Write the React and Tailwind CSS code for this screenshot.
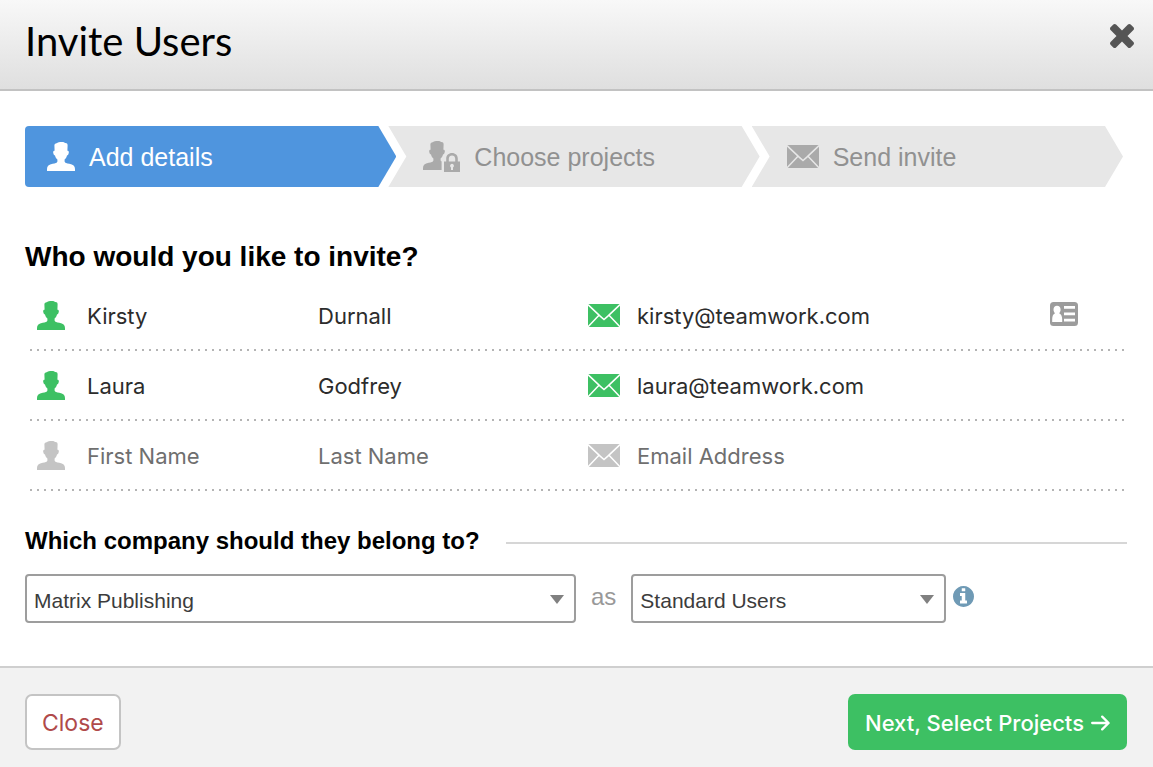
import React from "react";

const PERSON =
  "M7.4 3.6C7.3 2.2 8.2 1.4 9.6 1.2C11 .1 15.6-.3 17.4.5L18 1.1C19.8.9 20.7 1.8 20.6 3.6L20.4 8.8C21.9 8.8 22.1 10 21.6 11.4C21.2 12.8 20.7 13.3 20 13.4C19.6 15.2 18.6 16.6 17.6 17.6V19.4C17.8 20.8 19.8 21.2 22.3 21.7C26.2 22.5 28 24 28 27V29H0V27C0 24 1.8 22.5 5.7 21.7C8.2 21.2 10.2 20.8 10.4 19.4V17.6C9.4 16.6 8.4 15.2 8 13.4C7.3 13.3 6.8 12.8 6.4 11.4C5.9 10 6.1 8.8 7.6 8.8Z";

function PersonIcon({ className = "" }) {
  return (
    <svg className={"shrink-0 " + className} width="28" height="29" viewBox="0 0 28 29" fill="currentColor" aria-hidden="true">
      <path d={PERSON} />
    </svg>
  );
}

function PersonLockIcon() {
  return (
    <svg className="shrink-0" width="37" height="31" viewBox="0 0 37 31" fill="currentColor" aria-hidden="true">
      <path d="M7.4 3.6C7.3 2.2 8.2 1.4 9.6 1.2C11 .1 15.6-.3 17.4.5L18 1.1C19.8.9 20.7 1.8 20.6 3.6L20.4 8.8C21.9 8.8 22.1 10 21.6 11.4C21.2 12.8 20.7 13.3 20 13.4C19.6 15.2 18.6 16.6 17.6 17.6V19.4L18.6 20.4V29H0V27C0 24 1.8 22.5 5.7 21.7C8.2 21.2 10.2 20.8 10.4 19.4V17.6C9.4 16.6 8.4 15.2 8 13.4C7.3 13.3 6.8 12.8 6.4 11.4C5.9 10 6.1 8.8 7.6 8.8Z" />
      <path
        fillRule="evenodd"
        d="M21 20.5H23.2V17.6C23.2 14.2 25.7 12 29 12S34.8 14.2 34.8 17.6V20.5H37V31H21ZM25.8 20.5H32.2V17.8C32.2 15.7 30.8 14.5 29 14.5S25.8 15.7 25.8 17.8ZM29 22.8A2 2 0 0 0 28 26.5V29H30V26.5A2 2 0 0 0 29 22.8Z"
      />
    </svg>
  );
}

function MailIcon({ className = "", line = "stroke-white" }) {
  return (
    <svg className={"shrink-0 " + className} width="32" height="23" viewBox="0 0 32 23" aria-hidden="true">
      <rect width="32" height="23" rx="1" fill="currentColor" />
      <g className={line} fill="none" strokeWidth="1.5">
        <path d="M0 .6L12.4 12.4L16 15.6L19.6 12.4L32 .6" />
        <path d="M0 22.8L11.2 11M32 22.8L20.8 11" />
      </g>
    </svg>
  );
}

function CardIcon() {
  return (
    <svg width="28" height="24" viewBox="0 0 28 24" aria-hidden="true">
      <rect width="28" height="24" rx="3.5" fill="currentColor" />
      <g fill="#fff">
        <path d="M7 3.8C9.2 3.8 10.6 5.4 10.6 7.6C10.6 9.2 10 10.4 9.2 11.2C11.2 12 12.2 14.6 12.2 17.6V20H2.2V17.6C2.2 14.6 3 12 5 11.2C4.1 10.4 3.5 9.2 3.5 7.6C3.5 5.4 4.9 3.8 7 3.8Z" />
        <path d="M14 4H25V6.8H14ZM14 10.4H25V13.2H14ZM14 16.8H25V19.6H14Z" />
      </g>
    </svg>
  );
}

function Step({ first, active, icon, children }) {
  return (
    <li
      aria-current={active ? "step" : undefined}
      className={
        "-mr-2 flex h-[61px] items-center gap-3.5 text-[25px] leading-8 " +
        (first
          ? "rounded-l-[4px] pl-[22px] [clip-path:polygon(0_0,calc(100%-18px)_0,100%_50%,calc(100%-18px)_100%,0_100%)] "
          : "pl-[35px] [clip-path:polygon(0_0,calc(100%-18px)_0,100%_50%,calc(100%-18px)_100%,0_100%,18px_50%)] ") +
        (active ? "bg-[#4f95de] text-white" : "bg-[#e7e7e7] text-[#aaaaaa]")
      }
    >
      {icon}
      <span className={active ? "text-white" : "text-[#919191]"}>{children}</span>
    </li>
  );
}

const field =
  "w-full min-w-0 bg-transparent pt-0.5 font-[Inter,sans-serif] text-[22px] leading-8 text-[#2c2c2c] outline-none placeholder:text-[#6f6f6f] placeholder:opacity-100";

function InviteRow({ first, last, email, card }) {
  const tone = email ? "text-[#3dc063]" : "text-[#c4c4c4]";
  return (
    <li className="flex h-[70px] flex-col">
      <div className="grid flex-1 grid-cols-[50px_231fr_270fr_49px_413fr_74px] items-center pl-[7px]">
        <PersonIcon className={tone} />
        <input className={field} aria-label="First name" placeholder="First Name" defaultValue={first} />
        <input className={field} aria-label="Last name" placeholder="Last Name" defaultValue={last} />
        <MailIcon className={tone} />
        <input className={field} type="email" aria-label="Email address" placeholder="Email Address" defaultValue={email} />
        {card && (
          <button type="button" aria-label="Contact details" className="justify-self-start pb-0.5 text-[#9c9c9c]">
            <CardIcon />
          </button>
        )}
      </div>
      <div className="h-0.5 bg-[repeating-linear-gradient(90deg,#b4b4b4_0,#b4b4b4_2px,transparent_2px,transparent_7px)]" />
    </li>
  );
}

function Dropdown({ label, options, className }) {
  return (
    <div className={"relative " + className}>
      <select
        aria-label={label}
        className="h-[49px] w-full appearance-none rounded-[4px] border-2 border-[#9d9d9d] bg-white pl-[7px] pr-9 pt-1 text-[21px] leading-7 text-[#3c3c3c]"
      >
        {options.map((o) => (
          <option key={o}>{o}</option>
        ))}
      </select>
      <svg className="pointer-events-none absolute right-3 top-[21px]" width="14" height="9" viewBox="0 0 14 9" aria-hidden="true">
        <path d="M0 0H14L7 9Z" fill="#808080" />
      </svg>
    </div>
  );
}

export default function App() {
  return (
    <div className="flex min-h-screen flex-col bg-white font-['Liberation_Sans',Arial,sans-serif] text-black">
      <header className="flex h-[91px] items-start justify-between border-b-2 border-[#c2c2c2] bg-linear-to-b from-[#f8f8f8] to-[#dfdfdf] pl-[25px] pr-[19px]">
        <h1 className="pt-[17px] font-[Lato,sans-serif] text-[40px] leading-[48px]">Invite Users</h1>
        <button type="button" aria-label="Close dialog" className="pt-6 text-[#555555]">
          <svg width="24" height="24" viewBox="302 366 1188 1188" fill="currentColor" aria-hidden="true">
            <path d="M1490 1322q0 40-28 68l-136 136q-28 28-68 28t-68-28l-294-294-294 294q-28 28-68 28t-68-28l-136-136q-28-28-28-68t28-68l294-294-294-294q-28-28-28-68t28-68l136-136q28-28 68-28t68 28l294 294 294-294q28-28 68-28t68 28l136 136q28 28 28 68t-28 68l-294 294 294 294q28 28 28 68z" />
          </svg>
        </button>
      </header>

      <main className="flex-1 pb-[43px] pl-[25px] pr-[26px] pt-[35px]">
        <ol className="mr-3 grid grid-cols-3">
          <Step first active icon={<PersonIcon />}>Add details</Step>
          <Step icon={<PersonLockIcon />}>Choose projects</Step>
          <Step icon={<MailIcon line="stroke-[#e7e7e7]" />}>Send invite</Step>
        </ol>

        <h2 className="mt-[50px] text-[28px] font-bold leading-10">Who would you like to invite?</h2>
        <ul className="ml-[5px] mr-[3px] mt-1">
          <InviteRow first="Kirsty" last="Durnall" email="kirsty@teamwork.com" card />
          <InviteRow first="Laura" last="Godfrey" email="laura@teamwork.com" />
          <InviteRow />
        </ul>

        <div className="mt-[34px] flex items-center gap-[26px]">
          <h2 className="text-2xl font-bold leading-8">Which company should they belong to?</h2>
          <div className="mt-1 h-0.5 flex-1 bg-[#d6d6d6]" />
        </div>
        <div className="mt-[17px] flex items-center">
          <Dropdown className="w-1/2" label="Company" options={["Matrix Publishing"]} />
          <span className="px-[15px] pb-1 text-2xl leading-8 text-[#999999]">as</span>
          <Dropdown className="w-[315px]" label="User type" options={["Standard Users"]} />
          <button type="button" aria-label="About user types" className="ml-[7px] pb-1 text-[#6f9ab5]">
            <svg width="21" height="21" viewBox="128 128 1536 1536" fill="currentColor" aria-hidden="true">
              <path d="M1152 1376v-160q0-14-9-23t-23-9h-96v-512q0-14-9-23t-23-9h-320q-14 0-23 9t-9 23v160q0 14 9 23t23 9h96v320h-96q-14 0-23 9t-9 23v160q0 14 9 23t23 9h448q14 0 23-9t9-23zm-128-896v-160q0-14-9-23t-23-9h-192q-14 0-23 9t-9 23v160q0 14 9 23t23 9h192q14 0 23-9t9-23zm640 416q0 209-103 385.5t-279.5 279.5-385.5 103-385.5-103-279.5-279.5-103-385.5 103-385.5 279.5-279.5 385.5-103 385.5 103 279.5 279.5 103 385.5z" />
            </svg>
          </button>
        </div>
      </main>

      <footer className="flex items-center justify-between border-t-2 border-[#cfcfcf] bg-[#f2f2f2] pb-[17px] pl-[25px] pr-[26px] pt-[26px] font-[Inter,sans-serif] leading-8">
        <button type="button" className="h-14 rounded-[7px] border-2 border-[#c4c4c4] bg-white px-[15px] pt-0.5 text-[23px] text-[#b04a4a]">
          Close
        </button>
        <button type="button" className="flex h-14 items-center gap-[7px] rounded-[7px] bg-[#3dc063] px-[17px] pt-0.5 text-[22px] font-medium text-white">
          Next, Select Projects
          <svg width="19" height="16" viewBox="0 0 19 16" fill="none" stroke="currentColor" strokeWidth="2.3" strokeLinecap="round" strokeLinejoin="round" aria-hidden="true">
            <path d="M1.2 8H17.4M11.2 1.6L17.6 8L11.2 14.4" />
          </svg>
        </button>
      </footer>
    </div>
  );
}
